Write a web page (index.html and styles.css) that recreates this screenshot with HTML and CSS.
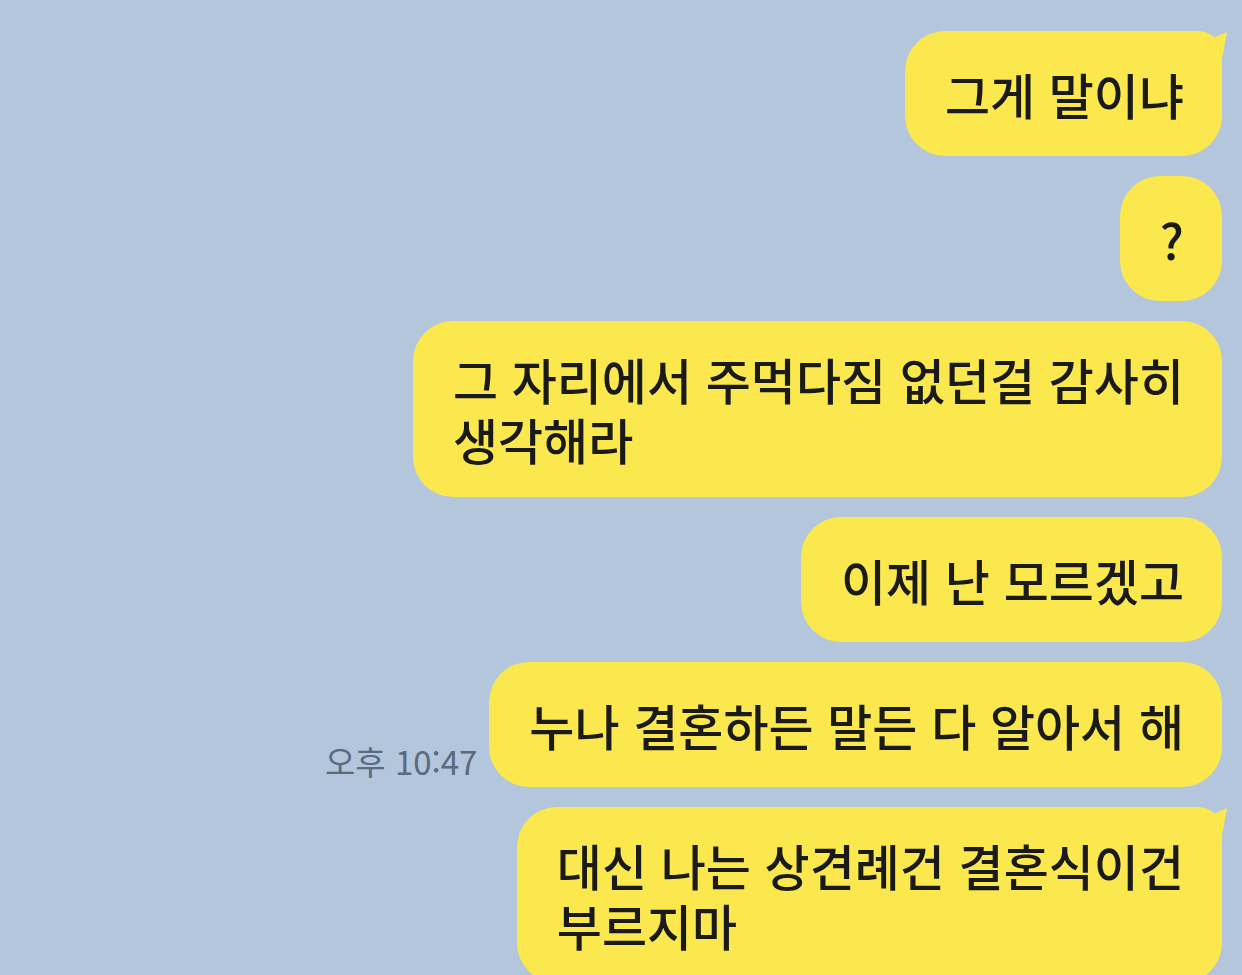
FILE: index.html
```html
<!DOCTYPE html>
<html lang="ko">
  <head>
    <meta charset="UTF-8" />
    <meta name="viewport" content="width=device-width, initial-scale=1.0" />
    <title>채팅</title>
    <link rel="stylesheet" href="styles.css">
  </head>

  <body>
    <div class="chat">
      <div class="row">
        <div class="bubble tail">그게 말이냐</div>
      </div>
      <div class="row">
        <div class="bubble">?</div>
      </div>
      <div class="row">
        <div class="bubble">그 자리에서 주먹다짐 없던걸 감사히<br>생각해라</div>
      </div>
      <div class="row">
        <div class="bubble">이제 난 모르겠고</div>
      </div>
      <div class="row">
        <span class="time">오후 10:47</span>
        <div class="bubble">누나 결혼하든 말든 다 알아서 해</div>
      </div>
      <div class="row">
        <div class="bubble tail">대신 나는 상견례건 결혼식이건<br>부르지마</div>
      </div>
    </div>
  </body>
</html>
```

FILE: styles.css
```css
html,
body {
  height: 100%;
}

body {
  margin: 0;
  padding: 0;
  background-color: #b3c6dc;
  font-family: "Noto Sans CJK KR", "Noto Sans", sans-serif;
  overflow: hidden;
}

.chat {
  display: flex;
  flex-direction: column;
  align-items: flex-end;
  gap: 20px;
  padding: 31px 20px 0 0;
}

.row {
  display: flex;
  align-items: flex-end;
  gap: 12px;
}

.bubble {
  position: relative;
  display: flex;
  align-items: center;
  box-sizing: border-box;
  min-height: 125px;
  background-color: #fbe84e;
  color: #1a1a18;
  font-size: 49px;
  font-weight: 500;
  line-height: 60px;
  padding: 28px 38px 28px 40px;
  border-radius: 40px;
  white-space: nowrap;
}

/* little ear on the top right of the first message in a group */
.bubble.tail {
  border-top-right-radius: 24px;
}

.bubble.tail::after {
  content: "";
  position: absolute;
  top: 1px;
  right: -5px;
  width: 28px;
  height: 32px;
  background-color: #fbe84e;
  clip-path: polygon(0 12px, 28px 0, 24px 22px, 22px 32px, 0 32px);
}

.time {
  color: #5b6a7e;
  font-size: 33px;
  line-height: 40px;
  margin-bottom: 6px;
}
```
